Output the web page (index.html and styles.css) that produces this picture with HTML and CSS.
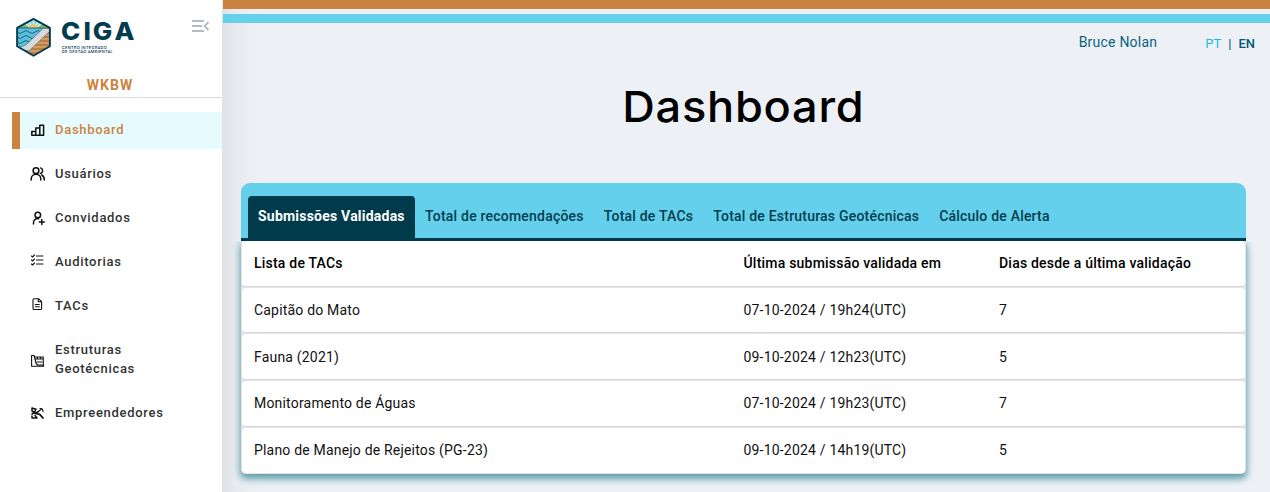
FILE: index.html
```html
<!DOCTYPE html>
<html lang="pt">
<head>
<meta charset="utf-8">
<title>CIGA - Dashboard</title>
<link rel="stylesheet" href="styles.css">
</head>
<body>
<div class="app">
  <aside class="sidebar">
    <div class="brand">
      <svg class="logo" width="120" height="42" viewBox="0 0 120 42">
        <defs><clipPath id="hex"><path d="M18.5 2.5 35 11.5V30.500L18.500 40 2 30.500V11.500Z"/></clipPath></defs>
        <g clip-path="url(#hex)">
          <rect width="38" height="42" fill="#5bbfd9"/>
          <rect width="38" height="12" fill="#8fd3ea"/>
          <path d="M18.500 9V2M16 9 12 3M21 9 25 3M14 10 9 6M23 10 28 6" stroke="#fff" stroke-width="1"/>
          <path d="M14 12a4.500 4 0 0 1 9 0Z" fill="#f3c762"/>
          <path d="M0 12V10Q8 5 14 12ZM37 12V10Q29 5 23 12Z" fill="#83b957"/>
          <path d="M0 12H37" stroke="#12526a" stroke-width=".8"/>
          <path d="M2 16q3 3 6 0t6 0 6 0 6 0M2 21q3 3 6 0t6 0 6 0M2 26q3 3 6 0t6 0" fill="none" stroke="#12526a" stroke-width=".8"/>
          <path d="M37 11V42H8L29 12Z" fill="#d99a5b"/>
          <path d="M26 17H37M23 21H37M20 25H37M17 29H37M14 33H37M11 37H37" stroke="#674a35" stroke-width=".7"/>
          <path d="M28 12.500H36V14L14 35 8 34 3 31Q10 31 14 26Z" fill="#d8d9dc" stroke="#354c58" stroke-width=".5"/>
        </g>
        <path d="M18.500 2.900 34.900 11.900V30.300L18.500 39.700 2.100 30.300V11.900Z" fill="none" stroke="#023d4f" stroke-width="1.900" stroke-linejoin="round"/>
        <g transform="translate(46 0) scale(1.08 1)"><text class="logo-name" y="24.500" x="0 20.800 29.300 49.500">CIGA</text></g>
        <text class="logo-sub" x="46.800" y="32.700" textLength="45" lengthAdjust="spacing">CENTRO INTEGRADO</text>
        <text class="logo-sub" x="46.800" y="37" textLength="51" lengthAdjust="spacing">DE GESTÃO AMBIENTAL</text>
      </svg>
      <svg class="collapse" width="18" height="12" viewBox="0 0 18 12" fill="none" stroke="#b3bac8" stroke-width="1.800"><path d="M0 1H12M0 6H10M0 11H12M16.500 2 12.500 6 16.500 10"/></svg>
    </div>
    <div class="org">WKBW</div>
    <nav class="menu">
      <a class="item active"><svg class="icon" viewBox="0 0 16 16"><path d="M1.800 13.300V9.500h4v3.800ZM5.800 13.300V6h4v7.300ZM9.800 13.300V3.300h3.800v10Z"/></svg><span>Dashboard</span></a>
      <a class="item"><svg class="icon" viewBox="0 0 16 16"><circle cx="6" cy="4.700" r="2.900"/><path d="M1.200 14v-1a4.800 4.800 0 0 1 9.600 0v1M10.500 1.900a2.900 2.900 0 0 1 0 5.600M11.800 9q2.500 1.500 2.500 5"/></svg><span>Usuários</span></a>
      <a class="item"><svg class="icon" viewBox="0 0 16 16"><circle cx="7.800" cy="5" r="2.800"/><path d="M3.500 14v-1.500a4 4 0 0 1 5-3.800M11.800 9.500v5M9.300 12h5"/></svg><span>Convidados</span></a>
      <a class="item list"><svg class="icon thin" viewBox="0 0 16 16"><path d="m1.500 3 1 1 2-2M1.500 7l1 1 2-2M1.500 11l1 1 2-2M6.500 3h6.500M6.500 7h6.500M6.500 11h6.500"/></svg><span>Auditorias</span></a>
      <a class="item list"><svg class="icon thin" viewBox="0 0 16 16"><path d="M4 1.700h4.500l3.100 3v6.800q0 1-1 1H4q-1 0-1-1V2.700q0-1 1-1ZM8.300 1.700v3h3.200M5.300 7.500h4M5.300 9.800h4"/></svg><span>TACs</span></a>
      <a class="item double"><svg class="icon thin" viewBox="0 0 16 16"><path d="M1.600 13.200V2.500h2.500l2 8 1.500 1.500h6V13.200ZM5 4h8.300v8M5.500 6h7.800M7 9h5M7.500 4v2M10.500 4v2"/></svg><span>Estruturas Geotécnicas</span></a>
      <a class="item"><svg class="icon thin" viewBox="0 0 16 16"><path d="M2 3v3l2.500 1.500L6 4M2 3l3 1M4.500 7.500 2 9M8 7 5 8.500l5 1 3 3.500M5 10.500l2 2.500H2v-2" stroke-width="1.500"/><path d="M6.500 8 12 3.500M10 3.500q3 0 3 3M9 9l4 4"/></svg><span>Empreendedores</span></a>
    </nav>
  </aside>
  <main class="main">
    <div class="stripe orange"></div>
    <div class="stripe blue"></div>
    <header class="top"><span class="user">Bruce Nolan</span><div class="lang"><span class="current">PT</span><span>|</span><span>EN</span></div></header>
    <h1 class="title">Dashboard</h1>
    <section class="panel">
      <div class="tabs">
        <span class="tab selected">Submissões Validadas</span><span class="tab">Total de recomendações</span><span class="tab">Total de TACs</span><span class="tab">Total de Estruturas Geotécnicas</span><span class="tab">Cálculo de Alerta</span>
      </div>
      <div class="table">
        <div class="row head"><span>Lista de TACs</span><span>Última submissão validada em</span><span>Dias desde a última validação</span></div>
        <div class="row"><span>Capitão do Mato</span><span>07-10-2024 / 19h24(UTC)</span><span>7</span></div>
        <div class="row"><span>Fauna (2021)</span><span>09-10-2024 / 12h23(UTC)</span><span>5</span></div>
        <div class="row"><span>Monitoramento de Águas</span><span>07-10-2024 / 19h23(UTC)</span><span>7</span></div>
        <div class="row"><span>Plano de Manejo de Rejeitos (PG-23)</span><span>09-10-2024 / 14h19(UTC)</span><span>5</span></div>
      </div>
    </section>
  </main>
</div>
</body>
</html>
```
FILE: styles.css
```css
* { box-sizing: border-box; }
body { margin: 0; font-family: Roboto, "Liberation Sans", sans-serif; background: #edf1f6; }
.app { display: flex; height: 492px; overflow: hidden; }

.sidebar { width: 223px; flex: none; background: #fff; border-right: 1px solid #e1e5e9; }
.brand { display: flex; height: 76px; padding: 16px 13px 0 15px; justify-content: space-between; align-items: flex-start; }
.collapse { margin-top: 4px; margin-right: -1px; }
.logo-name { font: 800 24px Inter, sans-serif; fill: #023d4f; }
.logo-sub { font: 500 4px Inter, sans-serif; fill: #023d4f; }
.org { height: 22px; border-bottom: 1px solid #dcdee0; padding-right: 2px; text-align: center; color: #cb8342; font-size: 14px; line-height: 19px; font-weight: 700; letter-spacing: 1px; }
.menu { display: flex; flex-direction: column; gap: 7px; padding: 14px 0 0 12px; }
.item { display: flex; align-items: center; height: 37px; padding-left: 18px; gap: 9px; color: #333; font-size: 13px; line-height: 19px; font-weight: 500; letter-spacing: .7px; }
.item span { padding-bottom: 2px; }
.item .icon { margin-top: -1px; }
.item.list .icon { margin-top: -4px; }
.item.double { height: 56px; }
.item.double span { width: 100px; }
.item.double .icon { margin-top: 1px; }
.item.active { background: #e6fbfd; border-left: 8px solid #cb8342; padding-left: 10px; color: #cb8342; }
.icon { width: 16px; height: 16px; flex: none; fill: none; stroke: #111; stroke-width: 1.5; stroke-linejoin: round; stroke-linecap: round; }
.icon.thin { stroke-width: 1.1; }

.main { flex: 1; min-width: 0; background: linear-gradient(90deg, #dfe3e7, #e7ebef 12px, #edf1f6 38px); }
.stripe { height: 9px; }
.orange { background: #cb8342; margin-bottom: 5px; }
.blue { background: #64d0eb; }
.top { display: flex; justify-content: flex-end; height: 55px; padding: 10px 15px 0 0; color: #0a6480; font-size: 14px; line-height: 19px; }
.user { letter-spacing: .22px; }
.lang { display: flex; gap: 7px; margin-left: 48px; padding-top: 1px; font-size: 13px; font-weight: 500; color: #05567a; }
.lang .current { color: #17bfd9; font-weight: 400; }
.title { margin: 0; height: 105px; padding-right: 6px; text-align: center; font: 500 43px/56px Inter, sans-serif; letter-spacing: .7px; color: #000; transform: scaleX(1.05); }
.panel { margin: 0 24px 0 18px; }
.tabs { display: flex; height: 58px; padding: 13px 0 0 7px; background: #64d0eb; border-bottom: 3px solid #003b4c; border-radius: 9px 9px 0 0; }
.tab { height: 42px; padding: 0 10px; line-height: 41px; font-size: 14px; font-weight: 500; letter-spacing: .21px; white-space: nowrap; color: #023d4f; }
.tab.selected { width: 167px; background: #003b4c; color: #fff; font-weight: 700; letter-spacing: .22px; border-radius: 4px 4px 0 0; }
.table { border: 1px solid #e1e3e4; border-top: 0; border-radius: 0 0 5px 5px; background: #e4e5e5; box-shadow: 0 4px 7px 1px #5f9eaa; clip-path: inset(0 -24px -24px); }
.row { display: grid; grid-template-columns: 489.500px 255.500px 1fr; align-items: center; height: 45.700px; margin-bottom: 1px; padding: 0 0 0 12px; background: #fff; border-bottom: 1px solid #d6d8d8; border-radius: 4px; color: #111; font-size: 14px; letter-spacing: .19px; }
.row:last-child { margin-bottom: 0; border-bottom: 0; padding-bottom: 1px; }
.head { color: #000; font-weight: 500; letter-spacing: .21px; }
```
